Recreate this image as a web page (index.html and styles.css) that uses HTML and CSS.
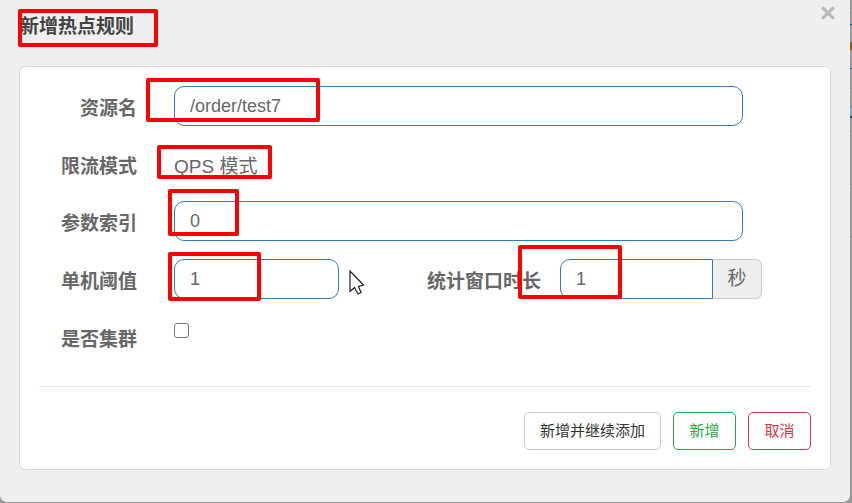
FILE: index.html
```html
<!DOCTYPE html>
<html lang="zh-CN">
<head>
<meta charset="utf-8">
<meta name="viewport" content="width=device-width, initial-scale=1">
<title>新增热点规则</title>
<link rel="stylesheet" href="styles.css">
</head>
<body>
<main class="dialog">
  <header class="dialog-header">
    <h1 class="dialog-title">新增热点规则</h1>
    <span class="mark mark-title"></span>
    <button class="close" type="button" aria-label="关闭">
      <svg viewBox="0 0 14 14" width="14" height="14"><path d="M1.3 1.3 12.7 12.7M12.7 1.3 1.3 12.7" stroke="currentColor" stroke-width="3.2" fill="none"/></svg>
    </button>
  </header>
  <form class="panel">
    <div class="row">
      <label class="label" for="resource">资源名</label>
      <div class="field narrow">
        <input class="input" id="resource" type="text" value="/order/test7">
        <span class="mark mark-resource"></span>
      </div>
    </div>
    <div class="row row-static">
      <span class="label">限流模式</span>
      <div class="field">
        <p class="static">QPS 模式</p>
        <span class="mark mark-mode"></span>
      </div>
    </div>
    <div class="row">
      <label class="label" for="index">参数索引</label>
      <div class="field narrow">
        <input class="input" id="index" type="text" value="0">
        <span class="mark mark-index"></span>
      </div>
    </div>
    <div class="row">
      <label class="label" for="count">单机阈值</label>
      <div class="field narrow split">
        <div class="cell">
          <input class="input" id="count" type="text" value="1">
          <span class="mark mark-count"></span>
          <svg class="cursor" viewBox="0 0 16 25" width="16" height="25"><path d="M1 1V21.5L5.5 17.5 9 24 12 22.5 9.5 16.5 14.5 15Z" fill="#fff" stroke="#1b1b2b" stroke-width="1.2"/></svg>
        </div>
        <label class="label" for="duration">统计窗口时长</label>
        <div class="cell group">
          <input class="input" id="duration" type="text" value="1">
          <span class="addon">秒</span>
          <span class="mark mark-duration"></span>
        </div>
      </div>
    </div>
    <div class="row">
      <label class="label" for="cluster">是否集群</label>
      <div class="field">
        <input class="check" id="cluster" type="checkbox">
      </div>
    </div>
    <footer class="actions">
      <button class="btn" type="button">新增并继续添加</button>
      <button class="btn btn-add" type="button">新增</button>
      <button class="btn btn-cancel" type="button">取消</button>
    </footer>
  </form>
</main>
</body>
</html>
```
FILE: styles.css
```css
* {
  box-sizing: border-box;
}

body {
  margin: 0;
  min-height: 100vh;
  padding: 0 2px 1px 0;
  display: flex;
  color: #676767;
  font: 19px/28px "Liberation Sans", "Noto Sans CJK SC", sans-serif;
  background:
    linear-gradient(#999 12px, #858585 12px 13px, #999 13px 24px, #174f83 24px 25px, #999 25px 42px, #8a5a20 42px 50px, #999 50px 68px, #174f83 68px 69px, #999 69px 88px, #858585 88px 89px, #999 89px 106px, #56818b 106px 107px, #86a7ad 107px 116px, #294652 116px 118px, #999 118px 131px, #858585 131px 132px, #999 132px 184px, #858585 184px 185px, #999 185px 236px, #858585 236px 238px, #999 238px) right top / 2px 100% no-repeat,
    #999;
}

input,
button {
  font: inherit;
  color: inherit;
}

.dialog {
  flex: 1;
  padding: 13px 19px 32px;
  background: #efefef;
  border-radius: 0 0 7px 7px;
}

.dialog-header {
  position: relative;
  margin-bottom: 25px;
}

.dialog-title {
  margin: 0;
  padding-left: 1px;
  color: #444;
  font-size: 19px;
  font-weight: 700;
}

.close {
  position: absolute;
  top: -7px;
  right: -4px;
  display: flex;
  padding: 0;
  border: 0;
  background: none;
  color: #bababa;
}

.panel {
  display: flex;
  flex-direction: column;
  gap: 18px;
  padding: 19px;
  background: #fff;
  border: 1px solid #d9d9d9;
  border-radius: 6px;
}

.row {
  display: grid;
  grid-template-columns: 98px 1fr;
  column-gap: 37px;
  min-height: 40px;
}

.row-static {
  min-height: 39px;
}

.label {
  padding-top: 9px;
  font-weight: 700;
  text-align: right;
  white-space: nowrap;
}

.field,
.cell {
  position: relative;
  min-width: 0;
}

.narrow {
  margin-right: 68px;
}

.split {
  display: grid;
  grid-template-columns: 165fr 202fr 202fr;
}

.group {
  display: flex;
  margin-left: 19px;
  margin-right: -19px;
}

.input {
  display: block;
  width: 100%;
  height: 40px;
  min-width: 0;
  padding: 0 15px;
  font-size: 18px;
  background: #fff;
  border: 1px solid #337ab7;
  border-radius: 10px;
}

.group .input {
  border-radius: 10px 0 0 10px;
}

.addon {
  flex: none;
  width: 49px;
  line-height: 38px;
  text-align: center;
  background: #eee;
  border: 1px solid #ccc;
  border-left: 0;
  border-radius: 0 6px 6px 0;
}

.static {
  margin: 0;
  padding-top: 9px;
}

.check {
  display: block;
  width: 15px;
  height: 15px;
  margin: 6px 0 0;
  appearance: none;
  background: #fff;
  border: 1px solid #767676;
  border-radius: 3px;
}

.actions {
  display: flex;
  justify-content: flex-end;
  gap: 12px;
  margin-top: 11px;
  padding-top: 25px;
  border-top: 1px solid #e5e5e5;
}

.btn {
  height: 38px;
  min-width: 63px;
  padding: 0 15px;
  color: #333;
  font-size: 15px;
  background: #fff;
  border: 1px solid #ccc;
  border-radius: 5px;
}

.btn-add {
  color: #28a745;
  border-color: #28a745;
}

.btn-cancel {
  color: #dc3545;
  border-color: #dc3545;
}

.mark {
  position: absolute;
  border: 4px solid #f00;
  border-radius: 2px;
  pointer-events: none;
}

.mark-title {
  left: -1px;
  top: -4px;
  width: 140px;
  height: 38px;
}

.mark-resource {
  left: -28px;
  top: -8px;
  width: 174px;
  height: 44px;
}

.mark-mode {
  left: -17px;
  top: 1px;
  width: 115px;
  height: 34px;
}

.mark-index {
  left: -6px;
  top: -12px;
  width: 71px;
  height: 47px;
}

.mark-count {
  left: -6px;
  top: -7px;
  width: 93px;
  height: 49px;
}

.mark-duration {
  left: -42px;
  top: -14px;
  width: 104px;
  height: 54px;
}

.cursor {
  position: absolute;
  left: calc(100% + 10px);
  top: 11px;
}
```
